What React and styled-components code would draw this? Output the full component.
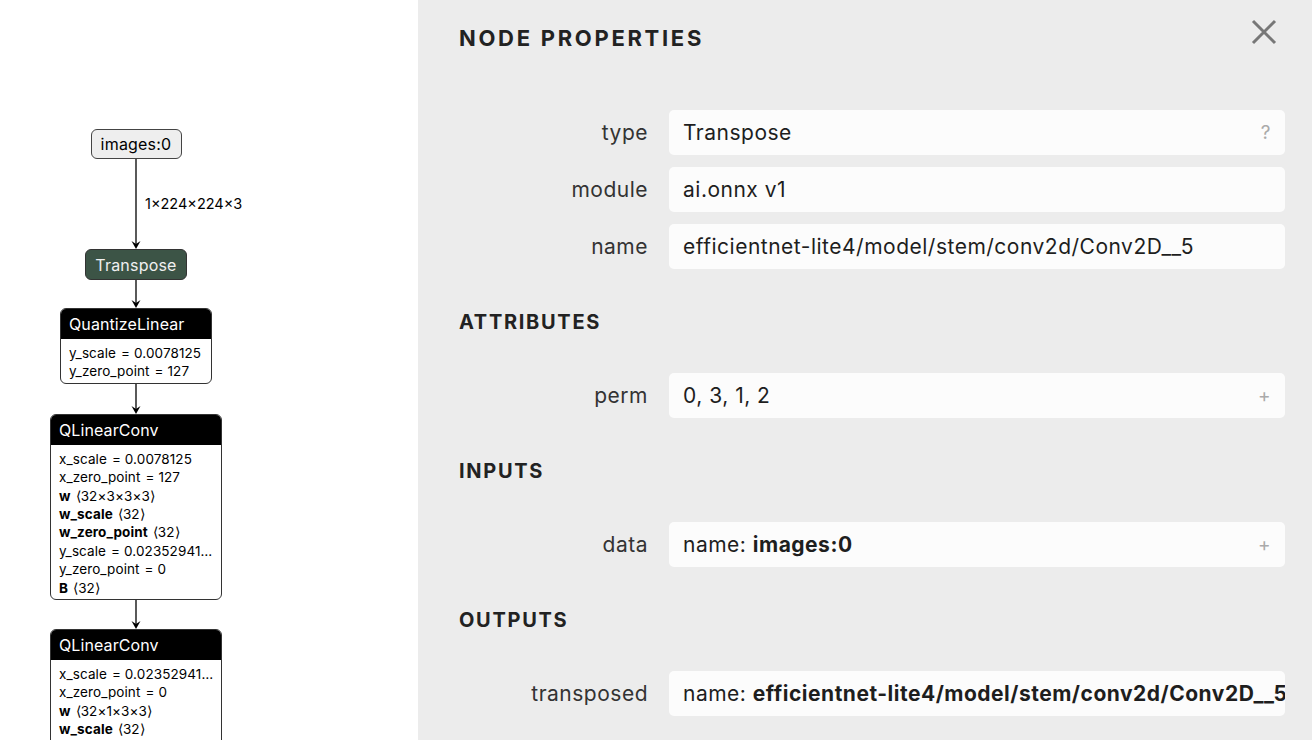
import styled, { createGlobalStyle } from "styled-components";

const GlobalStyle = createGlobalStyle`
  html, body {
    margin: 0;
    padding: 0;
  }
  body {
    font-family: Inter, "Noto Sans", sans-serif;
    overflow: hidden;
  }
`;

const quantize = [
    { k: "y_scale", v: "= 0.0078125" },
    { k: "y_zero_point", v: "= 127" },
];

const conv1 = [
    { k: "x_scale", v: "= 0.0078125" },
    { k: "x_zero_point", v: "= 127" },
    { k: "w", v: "⟨32×3×3×3⟩", bold: true },
    { k: "w_scale", v: "⟨32⟩", bold: true },
    { k: "w_zero_point", v: "⟨32⟩", bold: true },
    { k: "y_scale", v: "= 0.02352941…" },
    { k: "y_zero_point", v: "= 0" },
    { k: "B", v: "⟨32⟩", bold: true },
];

const conv2 = [
    { k: "x_scale", v: "= 0.02352941…" },
    { k: "x_zero_point", v: "= 0" },
    { k: "w", v: "⟨32×1×3×3⟩", bold: true },
    { k: "w_scale", v: "⟨32⟩", bold: true },
    { k: "w_zero_point", v: "⟨32⟩", bold: true },
    { k: "y_scale", v: "= 0.02352941…" },
];

export default function App(){
    return (
        <>
            <GlobalStyle />
            <Page>
                <Canvas>
                    <Graph>
                        <InputNode>images:0</InputNode>
                        <Edge height={90} label="1×224×224×3" />
                        <OpNode>Transpose</OpNode>
                        <Edge height={28} />
                        <Block title="QuantizeLinear" width={152} rows={quantize} />
                        <Edge height={30} />
                        <Block title="QLinearConv" width={172} rows={conv1} />
                        <Edge height={29} />
                        <Block title="QLinearConv" width={172} rows={conv2} />
                    </Graph>
                </Canvas>
                <Properties />
            </Page>
        </>
    )
}

function Edge({ height, label }){
    return (
        <EdgeWrap style={{ height }}>
            <svg width="12" height={height} viewBox={`0 0 12 ${height}`}>
                <line x1="6" y1="0" x2="6" y2={height - 2} stroke="#000" strokeWidth="1.3" />
                <path d={`M1.5 ${height - 8} L6 ${height} L10.5 ${height - 8} L6 ${height - 5} Z`} fill="#000" />
            </svg>
            {label && <EdgeLabel>{label}</EdgeLabel>}
        </EdgeWrap>
    )
}

function Block({ title, width, rows }){
    return (
        <BlockBox width={width}>
            <BlockHeader>{title}</BlockHeader>
            <BlockBody>
                {rows.map((r, i) => (
                    <Attr key={i}>
                        {r.bold ? <b>{r.k}</b> : r.k}
                        <Gap>{r.v}</Gap>
                    </Attr>
                ))}
            </BlockBody>
        </BlockBox>
    )
}

function Properties(){
    return (
        <Panel>
            <PanelHeader>
                <Title>NODE PROPERTIES</Title>
                <Close width="26" height="26" viewBox="0 0 26 26">
                    <path d="M2 2 L24 24 M24 2 L2 24" stroke="#777" strokeWidth="3" />
                </Close>
            </PanelHeader>
            <Rows first>
                <Row label="type" value="Transpose" hint="?" />
                <Row label="module" value="ai.onnx v1" />
                <Row label="name" value="efficientnet-lite4/model/stem/conv2d/Conv2D__5" />
            </Rows>
            <Section>ATTRIBUTES</Section>
            <Rows>
                <Row label="perm" value="0, 3, 1, 2" hint="+" />
            </Rows>
            <Section>INPUTS</Section>
            <Rows>
                <Row label="data" value={<>name: <b>images:0</b></>} hint="+" />
            </Rows>
            <Section>OUTPUTS</Section>
            <Rows>
                <Row flush label="transposed" value={<>name: <b>efficientnet-lite4/model/stem/conv2d/Conv2D__5</b></>} />
            </Rows>
        </Panel>
    )
}

function Row({ label, value, hint, flush }){
    return (
        <RowLine>
            <Label>{label}</Label>
            <Value flush={flush}>
                <ValueText>{value}</ValueText>
                {hint && <Hint>{hint}</Hint>}
            </Value>
        </RowLine>
    )
}

const Page = styled.div`
    display: flex;
    width: 100vw;
    height: 100vh;
    overflow: hidden;
`;

const Canvas = styled.div`
    width: 418px;
    flex-shrink: 0;
    background-color: #ffffff;
`;

const Graph = styled.div`
    width: 272px;
    padding-top: 129px;
    display: flex;
    flex-direction: column;
    align-items: center;
    color: #000;
`;

const InputNode = styled.div`
    box-sizing: border-box;
    width: 91px;
    height: 30px;
    border: 1px solid #444;
    border-radius: 6px;
    background-color: #eeeeee;
    font-size: 16px;
    letter-spacing: 0.2px;
    display: flex;
    justify-content: center;
    align-items: center;
`;

const OpNode = styled.div`
    box-sizing: border-box;
    width: 102px;
    height: 31px;
    border: 1px solid #333;
    border-radius: 6px;
    background-color: #3c5446;
    color: #f0f0f0;
    font-size: 16px;
    letter-spacing: 0.2px;
    display: flex;
    justify-content: center;
    align-items: center;
`;

const EdgeWrap = styled.div`
    position: relative;
    display: flex;
    justify-content: center;
    svg { display: block; }
`;

const EdgeLabel = styled.span`
    position: absolute;
    left: 15px;
    top: 36px;
    font-size: 14.5px;
    white-space: nowrap;
`;

const BlockBox = styled.div`
    box-sizing: border-box;
    width: ${p => p.width}px;
    border: 1px solid #333;
    border-radius: 6px;
    overflow: hidden;
    background-color: #ffffff;
    flex-shrink: 0;
`;

const BlockHeader = styled.div`
    height: 30px;
    background-color: #000;
    color: #fff;
    font-size: 16px;
    letter-spacing: 0.1px;
    padding-left: 8px;
    display: flex;
    align-items: center;
`;

const BlockBody = styled.div`
    padding: 5px 8px 2px;
    font-size: 13.5px;
    letter-spacing: 0.1px;
`;

const Attr = styled.div`
    height: 18.4px;
    line-height: 18.4px;
    white-space: nowrap;
    b { font-weight: 700; }
`;

const Gap = styled.span`
    margin-left: 5px;
`;

const Panel = styled.div`
    flex: 1;
    background-color: #ececec;
    padding: 24px 27px 0 41px;
    display: flex;
    flex-direction: column;
    color: #222;
`;

const PanelHeader = styled.div`
    display: flex;
    justify-content: space-between;
    align-items: flex-start;
`;

const Title = styled.h1`
    margin: 0;
    font-size: 22px;
    line-height: 28px;
    font-weight: 700;
    letter-spacing: 2.7px;
    color: #222;
`;

const Close = styled.svg`
    margin-top: -5px;
    margin-right: 8px;
`;

const Rows = styled.div`
    display: flex;
    flex-direction: column;
    gap: 12px;
    margin-top: ${p => p.first ? "58px" : "0"};
`;

const Section = styled.h2`
    margin: 39px 0 37px;
    font-size: 20px;
    line-height: 28px;
    font-weight: 700;
    letter-spacing: 1.7px;
    color: #222;
`;

const RowLine = styled.div`
    display: grid;
    grid-template-columns: 189px 1fr;
    column-gap: 21px;
    align-items: center;
`;

const Label = styled.div`
    text-align: right;
    font-size: 21px;
    letter-spacing: 0.5px;
    color: #333;
`;

const Value = styled.div`
    box-sizing: border-box;
    height: 45px;
    background-color: #fcfcfc;
    border-radius: 5px;
    padding: ${p => p.flush ? "0 0 0 14px" : "0 14px"};
    display: flex;
    align-items: center;
    justify-content: space-between;
    font-size: 21px;
    letter-spacing: 0.5px;
    color: #1e1e1e;
    overflow: hidden;
    min-width: 0;
`;

const ValueText = styled.span`
    white-space: nowrap;
    overflow: hidden;
    b { font-weight: 700; }
`;

const Hint = styled.span`
    color: #aaa;
    font-size: 19px;
    margin-left: 10px;
`;
